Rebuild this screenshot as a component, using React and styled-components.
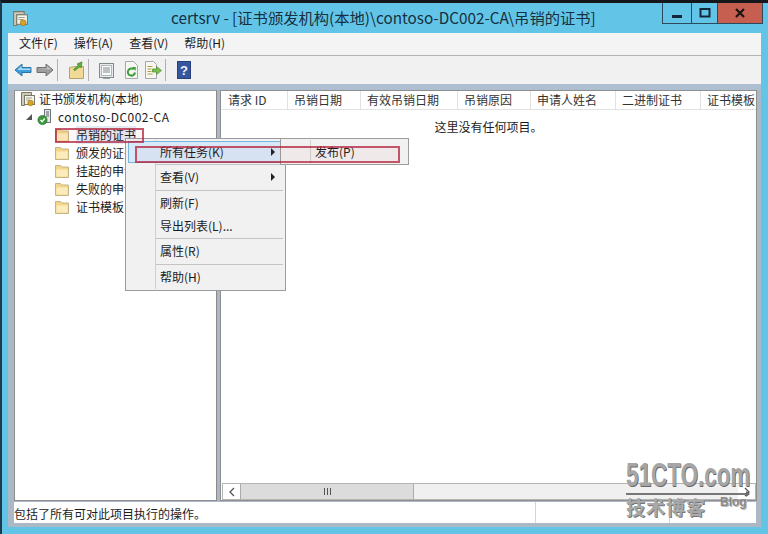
import React from 'react';
import styled, { createGlobalStyle } from 'styled-components';

const Global = createGlobalStyle`
  html, body { margin: 0; padding: 0; background: #62c5e8; }
  * { box-sizing: border-box; }
`;
const FONT = `"Noto Sans CJK SC", "Noto Sans", sans-serif`;

const Desktop = styled.div`
  position: relative; width: 768px; height: 534px; overflow: hidden;
  background: #62c5e8; border-top: 3px solid #14181c; border-left: 2px solid #1d3a4e;
  display: flex; flex-direction: column;
  font-family: ${FONT}; font-size: 12px; color: #1c1c1c;
`;
const TitleBar = styled.div`
  position: relative; height: 30px; flex: none; display: flex; align-items: center;
  padding-left: 10px;
`;
const TitleText = styled.div`
  position: absolute; left: 169px; top: 3px; font-size: 15.3px; line-height: 22px;
  color: #16303f; white-space: nowrap; font-family: ${FONT};
`;
const WinButtons = styled.div`
  position: absolute; right: 5px; top: 0; display: flex; height: 21px;
  border: 1px solid #2d4a5c; border-top: none;
`;
const WinBtn = styled.div`
  width: ${p => p.$w}px; display: flex; align-items: center; justify-content: center;
  background: ${p => p.$bg || 'transparent'};
  border-left: ${p => p.$first ? 'none' : '1px solid #2d4a5c'};
`;
const Client = styled.div`
  flex: 1; margin: 0 7px 7px 6px; display: flex; flex-direction: column; background: #abb9c6;
`;
const MenuBar = styled.div`
  height: 23px; flex: none; background: #f4f4f4; border-bottom: 1px solid #b4b4b4;
  display: flex; align-items: center; padding: 0 0 3px 11px; gap: 16px; font-size: 12px;
`;
const ToolBar = styled.div`
  height: 28px; flex: none; background: #f1f1f1; display: flex; align-items: center; padding-left: 6px;
`;
const ToolSep = styled.div`
  width: 1px; height: 22px; background: #b0b0b0; margin: 0 ${p => p.$r}px 0 ${p => p.$l}px;
`;
const ToolGap = styled.span` width: ${p => p.$w}px; flex: none; `;
const Strip = styled.div` height: 6px; flex: none; background: #aebfd2; `;
const Panes = styled.div`
  flex: 1; min-height: 0; display: flex; padding: 0 4px 0 6px; gap: 3px;
`;
const TreePane = styled.div`
  width: 203px; flex: none; background: #fff; border: 1px solid #8f8f8f; border-top-color: #9a9a9a;
  padding: 0 0 0 3px; border-right-color: #8a8a8a;
`;
const Row = styled.div`
  height: 18px; display: flex; align-items: center; padding-left: ${p => p.$indent}px; gap: ${p => p.$gap || 5}px;
  white-space: nowrap; line-height: 18px; color: #1c1c1c;
  &:first-child { margin-top: -1px; }
`;
const RowLabel = styled.span`
  background: ${p => p.$selected ? '#e2eaf4' : 'transparent'}; margin-left: ${p => p.$ml || 0}px;
  letter-spacing: ${p => p.$ls || 0}px;
`;
const Caret = styled.span`
  width: 0; height: 0; border-left: 6px solid transparent; border-bottom: 6px solid #555; margin-right: 1px;
`;
const ListPane = styled.div`
  flex: 1; min-width: 0; background: #fff; border: 1px solid #8f8f8f; display: flex; flex-direction: column; position: relative;
`;
const Header = styled.div`
  height: 19px; flex: none; display: flex; background: #fff; border-bottom: 1px solid #e2e2e2; overflow: hidden;
`;
const HeadCell = styled.div`
  width: ${p => p.$w}px; flex: none; padding-left: 6px; white-space: nowrap; line-height: 18px;
  border-right: 1px solid #e2e2e2; color: #333; overflow: hidden;
  &:first-child { padding-left: 7px; }
`;
const Empty = styled.div`
  flex: 1; text-align: center; padding-top: 8px; line-height: 18px; color: #1c1c1c;
`;
const ScrollBar = styled.div`
  height: 17px; flex: none; margin: 0 0 0 1px; display: flex; background: #f0f0f0; border: 1px solid #b5b5b5;
`;
const ScrollBtn = styled.div`
  width: 17px; flex: none; display: flex; align-items: center; justify-content: center; background: #fff;
`;
const Thumb = styled.div`
  width: 174px; flex: none; background: #dcdcdc; border-left: 1px solid #ababab; border-right: 1px solid #ababab;
  display: flex; align-items: center; justify-content: center; gap: 1px;
`;
const Grip = styled.i` width: 1px; height: 7px; background: #555; margin: 0 .5px; `;
const Track = styled.div` flex: 1; `;
const StatusBar = styled.div`
  height: 21px; flex: none; margin: 1px 5px 4px 6px; background: #fff; display: flex; align-items: center;
  line-height: 18px; color: #1c1c1c;
`;
const StatusCell = styled.div` width: ${p => p.$w}px; flex: none; padding: 2px 0 0 0; white-space: nowrap; `;
const StatusDiv = styled.div` width: 1px; flex: none; align-self: stretch; background: #d5d5d5; `;

const Menu = styled.div`
  position: absolute; left: ${p => p.$x}px; top: ${p => p.$y}px; width: ${p => p.$w}px;
  background: #f1f1f1; border: 1px solid #9c9c9c;
  padding: 2px 2px 1px;
`;
const Gutter = styled.div`
  position: absolute; left: ${p => p.$l}px; top: 1px; bottom: 1px; width: 1px; background: #cfcfcf;
`;
const MenuItem = styled.div`
  position: relative; height: ${p => p.$h || 22}px; display: flex; align-items: center; padding-left: 32px;
  line-height: 18px; background: ${p => p.$active ? '#d7e9f8' : 'transparent'};
  outline: ${p => p.$active ? '1px solid #78b4dc' : 'none'}; outline-offset: -1px; color: #1c1c1c;
`;
const Arrow = styled.span`
  position: absolute; right: 8px; top: 50%; margin-top: -4px; width: 0; height: 0;
  border-left: 4px solid #222; border-top: 4px solid transparent; border-bottom: 4px solid transparent;
`;
const MenuSep = styled.div` height: 1px; margin: 1px 0 0 28px; background: #c4c4c4; `;
const RedBox = styled.div`
  position: absolute; left: ${p => p.$x}px; top: ${p => p.$y}px; width: ${p => p.$w}px; height: ${p => p.$h}px;
  border: 2px solid rgba(176, 28, 54, .72); background: rgba(190, 40, 60, .035); pointer-events: none;
`;
const Watermark = styled.div`
  position: absolute; left: 624px; top: 456px; width: 128px; pointer-events: none;
  display: flex; flex-direction: column; font-family: "Liberation Sans", sans-serif;
`;
const WmTop = styled.div`
  font-size: 33px; font-weight: 700; line-height: 32px; color: #a6a6a6; height: 32px;
  text-shadow: 1px 1px 0 #666; white-space: nowrap; transform: scaleX(.68); transform-origin: left;
`;
const WmRule = styled.div`
  position: relative; height: 2px; margin-top: 2px; width: 122px; background: #777;
  &::after {
    content: ''; position: absolute; right: -2px; top: -2px; width: 0; height: 0;
    border-left: 4px solid #666; border-top: 3px solid transparent; border-bottom: 3px solid transparent;
  }
`;
const WmBottom = styled.div` display: flex; align-items: flex-start; `;
const WmCn = styled.div`
  font-family: ${FONT}; font-size: 19px; font-weight: 700; line-height: 24px; letter-spacing: 1px;
  color: #a8a8a8; text-shadow: 1px 1px 0 #777; white-space: nowrap;
`;
const WmBlog = styled.div`
  font-size: 12px; font-weight: 700; color: #8a8a8a; margin: 1px 0 0 14px; line-height: 12px; text-shadow: 1px 1px 0 #bbb;
`;

const CertIcon = ({ s = 16 }) => (
  <svg width={s} height={s} viewBox="0 0 16 16">
    <path d="M1.500 1.500h10v3h-7v10h-3z" fill="#cfcab6" stroke="#7a7868" />
    <rect x="4.500" y="4.500" width="10" height="9" fill="#f7f6ee" stroke="#7a7868" />
    <path d="M6 7h6M6 9h4" stroke="#a0a096" />
    <circle cx="10.500" cy="12" r="2.800" fill="#d8a328" stroke="#9a7114" strokeWidth=".6" />
  </svg>
);
const ServerIcon = () => (
  <svg width="18" height="18" viewBox="0 0 18 18">
    <rect x="8.500" y="1.500" width="6" height="13" fill="#e6e8ea" stroke="#6f7478" />
    <path d="M10 4h3M10 6h3M10 8h3" stroke="#5b6268" />
    <circle cx="6.500" cy="12" r="4.600" fill="#3a9a3a" stroke="#1f6a24" strokeWidth=".6" />
    <path d="M4.500 12l1.600 1.700 2.600-3.200" stroke="#fff" strokeWidth="1.300" fill="none" />
  </svg>
);
const Folder = () => (
  <svg width="16" height="15" viewBox="0 0 16 15" style={{ flex: 'none' }}>
    <path d="M1.500 13.500v-12h5l1 1.500h7v10.500z" fill="#f2d788" stroke="#c4b48a" />
    <path d="M2.500 12.500v-7h11v7z" fill="#fcecbb" />
  </svg>
);
const BackIcon = () => (
  <svg width="18" height="16" viewBox="0 0 18 16">
    <path d="M1 8l7-6v3.500h9v5H8V14z" fill="#3c9fdb" stroke="#2a74a8" />
    <path d="M3.500 7.500L7.500 4v2.500h9V8H5z" fill="#a8daf5" />
  </svg>
);
const FwdIcon = () => (
  <svg width="18" height="16" viewBox="0 0 18 16">
    <path d="M17 8l-7-6v3.500H1v5h9V14z" fill="#9d9d9d" stroke="#707070" />
    <path d="M2 6.500h9V4l4 3.500z" fill="#c4c4c4" />
  </svg>
);
const UpIcon = () => (
  <svg width="15" height="18" viewBox="0 0 15 18">
    <path d="M.5 17.500V6.500l6-1h8v12z" fill="#f0da95" stroke="#b5a269" />
    <path d="M13 .8L8 3l1.500 1-5 4.500 1 1.200L11 5.800l1.200 1.200z" fill="#5dae3a" stroke="#3b7a2b" strokeWidth=".6" />
  </svg>
);
const PageIcon = () => (
  <svg width="15" height="17" viewBox="0 0 15 17">
    <rect x=".5" y="1.500" width="14" height="14" fill="#e9ecec" stroke="#7f8a8e" />
    <rect x="2.500" y="3.500" width="10" height="10" fill="#fafafa" stroke="#aeb6b9" />
    <path d="M4 6h7M4 8h7M4 10h7" stroke="#7f8a8e" />
    <path d="M4 16.500h7" stroke="#9aa4a8" />
  </svg>
);
const RefreshIcon = () => (
  <svg width="15" height="18" viewBox="0 0 15 18">
    <path d="M1.500 .5h8l4 4v13h-12z" fill="#f7f7f2" stroke="#a4a8a8" />
    <path d="M11 11.500a3.600 3.600 0 1 1-1.200-3.200" fill="none" stroke="#3f9c3b" strokeWidth="2" />
    <path d="M8.200 5.800l3.800.4-.6 3.800z" fill="#3f9c3b" />
  </svg>
);
const ExportIcon = () => (
  <svg width="17" height="18" viewBox="0 0 17 18">
    <path d="M.5 .5h8l3 3v14h-11z" fill="#f7f7f2" stroke="#a4a8a8" />
    <path d="M2.500 5.500h5M2.500 8h4M2.500 10.500h4M2.500 13h5" stroke="#b59b45" />
    <path d="M7.500 8h4V5.500l5 4-5 4V11h-4z" fill="#7ebf4f" stroke="#4b8a35" strokeWidth=".7" />
  </svg>
);
const HelpIcon = () => (
  <svg width="14" height="18" viewBox="0 0 14 18">
    <rect x=".5" y=".5" width="13" height="17" fill="#36579f" stroke="#27417c" />
    <text x="7" y="14" textAnchor="middle" fontSize="13" fontWeight="700" fontFamily="Liberation Sans" fill="#f2f4fb">?</text>
  </svg>
);

const columns = [
  ['请求 ID', 67], ['吊销日期', 73], ['有效吊销日期', 97], ['吊销原因', 73],
  ['申请人姓名', 85], ['二进制证书', 85], ['证书模板', 70],
];

export default function App() {
  return (
    <Desktop>
      <Global />
      <TitleBar>
        <CertIcon s={17} />
        <TitleText>certsrv - [证书颁发机构(本地)\contoso-DC002-CA\吊销的证书]</TitleText>
        <WinButtons>
          <WinBtn $w={28} $first>
            <svg width="12" height="12" viewBox="0 0 12 12"><rect x="1" y="8" width="10" height="3" fill="#12283a" /></svg>
          </WinBtn>
          <WinBtn $w={26}>
            <svg width="12" height="12" viewBox="0 0 12 12"><rect x="1.500" y="2" width="9" height="7.500" fill="none" stroke="#12283a" strokeWidth="2" /></svg>
          </WinBtn>
          <WinBtn $w={45} $bg="#c75f50">
            <svg width="12" height="12" viewBox="0 0 12 12"><path d="M2 2l8 8M10 2l-8 8" stroke="#1a1414" strokeWidth="2.200" /></svg>
          </WinBtn>
        </WinButtons>
      </TitleBar>
      <Client>
        <MenuBar>
          <span>文件(F)</span><span>操作(A)</span><span>查看(V)</span><span>帮助(H)</span>
        </MenuBar>
        <ToolBar>
          <BackIcon /><ToolGap $w={4} /><FwdIcon />
          <ToolSep $l={3} $r={11} /><UpIcon /><ToolSep $l={4} $r={10} />
          <PageIcon /><ToolGap $w={10} /><RefreshIcon /><ToolGap $w={6} /><ExportIcon />
          <ToolSep $l={3} $r={11} /><HelpIcon />
        </ToolBar>
        <Strip />
        <Panes>
          <TreePane>
            <Row $indent={2} $gap={3}><CertIcon s={16} /><RowLabel>证书颁发机构(本地)</RowLabel></Row>
            <Row $indent={8} $gap={3}><Caret /><ServerIcon /><RowLabel $ml={1} $ls={0.45}>contoso-DC002-CA</RowLabel></Row>
            <Row $indent={36} $gap={6}><Folder /><RowLabel $selected>吊销的证书</RowLabel></Row>
            <Row $indent={36} $gap={6}><Folder /><RowLabel>颁发的证书</RowLabel></Row>
            <Row $indent={36} $gap={6}><Folder /><RowLabel>挂起的申请</RowLabel></Row>
            <Row $indent={36} $gap={6}><Folder /><RowLabel>失败的申请</RowLabel></Row>
            <Row $indent={36} $gap={6}><Folder /><RowLabel>证书模板</RowLabel></Row>
          </TreePane>
          <ListPane>
            <Header>
              {columns.map(([t, w]) => <HeadCell key={t} $w={w}>{t}</HeadCell>)}
            </Header>
            <Empty>这里没有任何项目。</Empty>
            <ScrollBar>
              <ScrollBtn>
                <svg width="8" height="10" viewBox="0 0 8 10"><path d="M6 1L2 5l4 4" fill="none" stroke="#555" strokeWidth="1.300" /></svg>
              </ScrollBtn>
              <Thumb><Grip /><Grip /><Grip /></Thumb>
              <Track />
              <ScrollBtn>
                <svg width="8" height="10" viewBox="0 0 8 10"><path d="M2 1l4 4-4 4" fill="none" stroke="#555" strokeWidth="1.300" /></svg>
              </ScrollBtn>
            </ScrollBar>
          </ListPane>
        </Panes>
        <StatusBar>
          <StatusCell $w={521}>包括了所有可对此项目执行的操作。</StatusCell>
          <StatusDiv />
          <StatusCell $w={133} />
          <StatusDiv />
        </StatusBar>
      </Client>

      <Menu $x={123} $y={135} $w={161}>
        <Gutter $l={29} />
        <MenuItem $active>所有任务(K)<Arrow /></MenuItem>
        <MenuSep />
        <MenuItem $h={24}>查看(V)<Arrow /></MenuItem>
        <MenuSep />
        <MenuItem $h={23}>刷新(F)</MenuItem>
        <MenuItem $h={23}>导出列表(L)...</MenuItem>
        <MenuSep />
        <MenuItem $h={24}>属性(R)</MenuItem>
        <MenuSep />
        <MenuItem $h={24}>帮助(H)</MenuItem>
      </Menu>
      <Menu $x={278} $y={135} $w={129}>
        <Gutter $l={29} />
        <MenuItem>发布(P)</MenuItem>
      </Menu>

      <RedBox $x={53} $y={125} $w={89} $h={15} />
      <RedBox $x={133} $y={143} $w={265} $h={17} />

      <Watermark>
        <WmTop>51CTO.com</WmTop>
        <WmRule />
        <WmBottom><WmCn>技术博客</WmCn><WmBlog>Blog</WmBlog></WmBottom>
      </Watermark>
    </Desktop>
  );
}
